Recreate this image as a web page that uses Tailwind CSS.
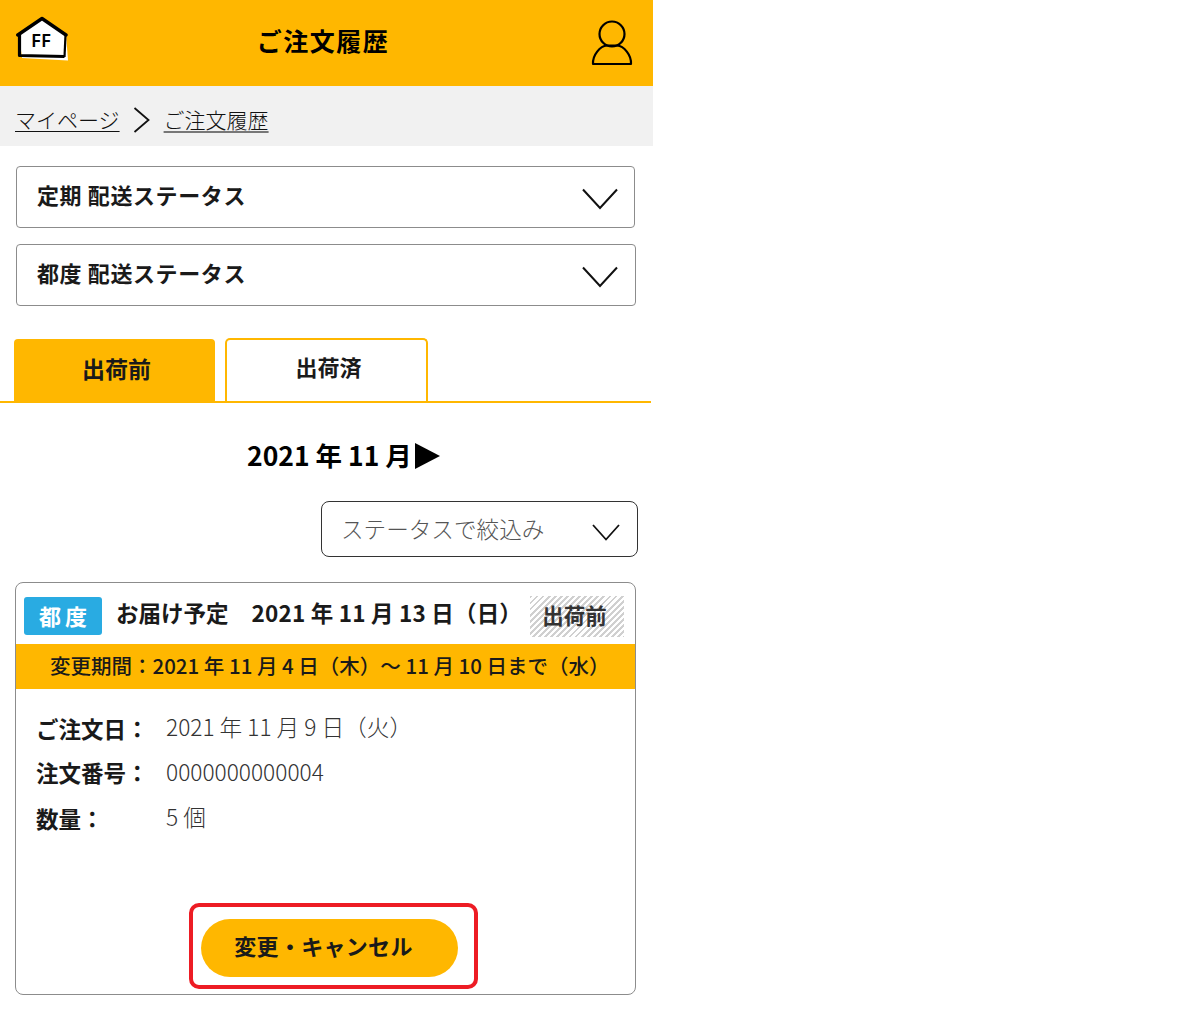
<!DOCTYPE html>
<html lang="ja">

<head>
    <meta charset="UTF-8">
    <meta name="viewport" content="width=device-width, initial-scale=1.0">
    <title>ご注文履歴</title>
    <script src="https://cdn.jsdelivr.net/npm/@tailwindcss/browser@4"></script>
</head>

<body class="bg-white font-['Noto_Sans_CJK_JP','Noto_Sans',sans-serif] text-[#1a1a1a]">
    <main class="w-[653px] h-[1020px] overflow-hidden">
        <!-- header -->
        <header class="h-[86px] bg-[#ffb700] flex items-center justify-between pl-[16px] pr-[20px]">
            <svg class="w-[54px] h-[46px] -mt-[9px]" viewBox="0 0 54 46">
                <path d="M3 18 L26 3 L50 18 L52 44.500 L6 42 Z" fill="#fff" />
                <path d="M1.800 19 L26 2.500 L50 19" fill="none" stroke="#000" stroke-width="3.400" stroke-linejoin="round" stroke-linecap="round" />
                <path d="M3.500 18 V39.500 L48.500 40.500" fill="none" stroke="#000" stroke-width="3.200" stroke-linejoin="round" />
                <path d="M48.500 41 L49.500 19" fill="none" stroke="#000" stroke-width="2.200" />
                <text x="15" y="31" font-size="18.500" font-weight="600" fill="#000" font-family="Noto Sans">FF</text>
            </svg>
            <h1 class="text-[25px] font-bold tracking-[1.5px] text-black -ml-[15px] -mt-[4px]">ご注文履歴</h1>
            <svg class="w-[42px] h-[48px]" viewBox="0 0 42 48">
                <circle cx="21" cy="15" r="12.5" fill="none" stroke="#000" stroke-width="2.2" />
                <path d="M2 45 H40 C40.500 36 33 27 26 26.500 H16 C9 27 1.500 36 2 45 Z" fill="none" stroke="#000" stroke-width="2.200" stroke-linejoin="round" />
            </svg>
        </header>

        <!-- breadcrumb -->
        <nav class="h-[60px] bg-[#f1f1f1] flex items-center pl-[15px] text-[21px] font-light text-[#111]">
            <a class="underline underline-offset-[3px] decoration-1 mt-[7px]">マイページ</a>
            <svg class="w-[18px] h-[26px] ml-[13px] mr-[13px] mt-[7px]" viewBox="0 0 18 26">
                <path d="M1.500 1 L15.500 13 L1.500 25" fill="none" stroke="#111" stroke-width="1.800" />
            </svg>
            <a class="underline underline-offset-[3px] decoration-2 decoration-[#777] mt-[7px]">ご注文履歴</a>
        </nav>

        <!-- accordions -->
        <section class="pt-[20px] pl-[16px] w-[636px] flex flex-col gap-[16px]">
            <div class="w-[619px] h-[62px] border border-[#8c8c8c] rounded-[4px] flex items-center justify-between pl-[20px] pr-[16px]">
                <span class="text-[22px] font-bold -mt-[5px] tracking-[0.6px]">定期 配送ステータス</span>
                <svg class="w-[36px] h-[22px] mt-[3px]" viewBox="0 0 36 22"><path d="M1 1.500 L18 20 L35 1.500" fill="none" stroke="#111" stroke-width="2" /></svg>
            </div>
            <div class="h-[62px] border border-[#8c8c8c] rounded-[4px] flex items-center justify-between pl-[20px] pr-[17px]">
                <span class="text-[22px] font-bold -mt-[5px] tracking-[0.6px]">都度 配送ステータス</span>
                <svg class="w-[36px] h-[22px] mt-[3px]" viewBox="0 0 36 22"><path d="M1 1.500 L18 20 L35 1.500" fill="none" stroke="#111" stroke-width="2" /></svg>
            </div>
        </section>

        <!-- tabs -->
        <div class="mt-[32px] w-[651px] h-[65px] border-b-2 border-[#ffb700] flex items-end pl-[14px]">
            <div class="w-[201px] h-[62px] bg-[#ffb700] rounded-t-[4px] flex items-center justify-center pl-[4px] pb-[4px] text-[23px] font-bold">出荷前</div>
            <div class="ml-[10px] w-[203px] h-[63px] border-2 border-b-0 border-[#ffb700] rounded-t-[5px] flex items-center justify-center pl-[4px] pb-[9px] text-[22px] font-bold">出荷済</div>
        </div>

        <!-- month -->
        <div class="h-[98px] pl-[247px] pt-[33px] flex items-start">
            <h2 class="text-[26.5px] leading-[38px] font-bold text-black">2021 年 11 月</h2>
            <svg class="w-[25px] h-[26px] mt-[7px] ml-[3px]" viewBox="0 0 25 26"><path d="M0 0 L25 13 L0 26 Z" fill="#000" /></svg>
        </div>

        <!-- status filter -->
        <div class="pl-[321px]">
            <div class="w-[317px] h-[56px] border border-[#333] rounded-[8px] flex items-center justify-between pl-[19px] pr-[17px]">
                <span class="text-[22.6px] font-light text-[#555]">ステータスで絞込み</span>
                <svg class="w-[28px] h-[17px] mt-[6px]" viewBox="0 0 28 17"><path d="M1 1 L14 15.500 L27 1" fill="none" stroke="#111" stroke-width="1.800" /></svg>
            </div>
        </div>

        <!-- order card -->
        <article class="relative mt-[25px] ml-[15px] w-[621px] h-[413px] border border-[#8c8c8c] rounded-[8px] overflow-hidden">
            <div class="h-[61px] flex items-start pl-[8px]">
                <span class="mt-[14px] w-[78px] h-[38px] bg-[#29abe2] rounded-[3px] flex items-center justify-center pl-[4px] pb-[2px] text-white text-[22px] font-bold tracking-[4px]">都度</span>
                <span class="mt-[11px] ml-[14px] text-[22.5px] leading-[36px] font-bold whitespace-pre">お届け予定<span class="inline-block w-[23px]"></span><span class="tracking-[0.2px]">2021 年 11 月 13 日（日）</span></span>
                <span class="absolute left-[514px] top-[13px] w-[94px] h-[41px] bg-[repeating-linear-gradient(135deg,#d0d0d0_0_2px,#fff_2px_4.300px)] flex items-center justify-center pr-[5px] pb-[3px] text-[21.500px] font-bold text-[#333]">出荷前</span>
            </div>
            <div class="h-[45px] bg-[#ffb700] flex items-center pl-[34px] pb-[2px] text-[20.5px] whitespace-pre font-medium">変更期間：2021 年 11 月 4 日（木）～ 11 月 10 日まで（水）</div>

            <dl class="pt-[22px] pl-[20px] flex flex-col">
                <div class="flex h-[36px] items-center">
                    <dt class="w-[130px] text-[22.5px] font-bold">ご注文日：</dt>
                    <dd class="text-[22.7px] font-light text-[#333] -mt-[4px]">2021 年 11 月 9 日（火）</dd>
                </div>
                <div class="flex h-[36px] items-center mt-[8px]">
                    <dt class="w-[130px] text-[22.5px] font-bold">注文番号：</dt>
                    <dd class="text-[22.7px] font-light text-[#333] -mt-[2px]">0000000000004</dd>
                </div>
                <div class="flex h-[36px] items-center mt-[10px]">
                    <dt class="w-[130px] text-[22.5px] font-bold">数量：</dt>
                    <dd class="text-[22.7px] font-light text-[#333] -mt-[3px]">5 個</dd>
                </div>
            </dl>

            <div class="mt-[66px] ml-[173px] w-[289px] h-[86px] border-[4px] border-[#ed1c24] rounded-[10px] flex items-center pl-[8px] pt-[4px]">
                <button class="w-[257px] h-[58px] bg-[#ffb700] rounded-full text-[22px] font-bold tracking-[0.3px] pr-[12px] pb-[6px]">変更・キャンセル</button>
            </div>
        </article>
    </main>
</body>

</html>
